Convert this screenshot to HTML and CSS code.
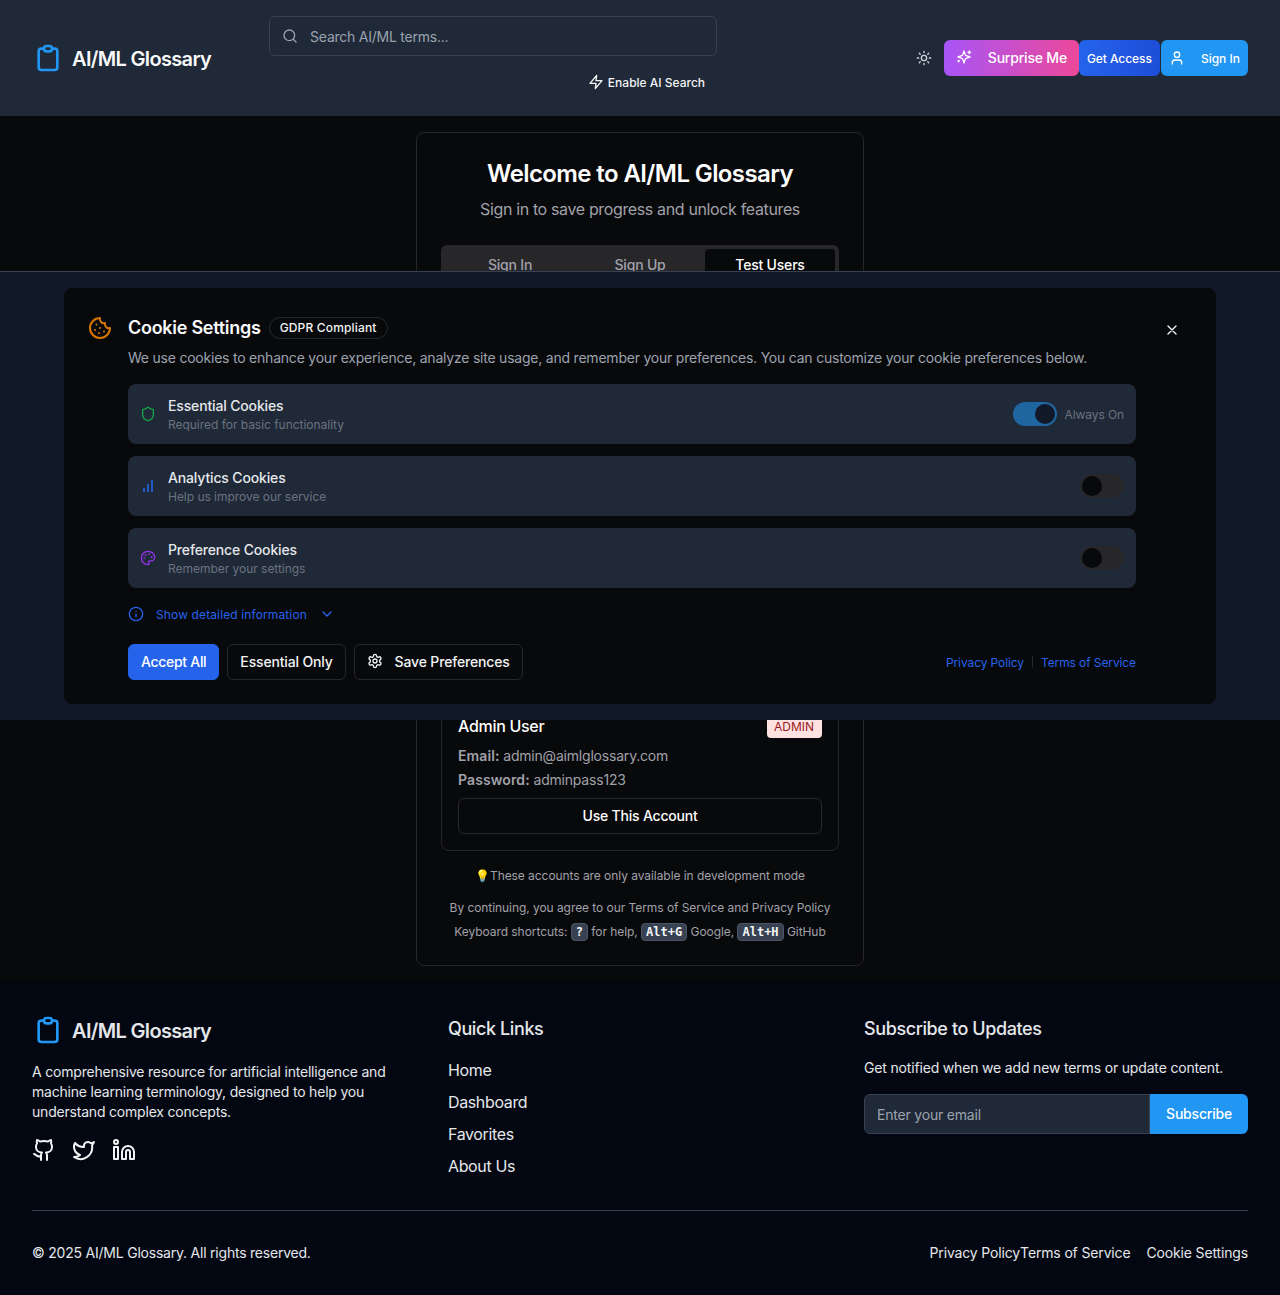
FILE: index.html
```html
<!DOCTYPE html>
<html lang="en">
<head>
<meta charset="utf-8">
<title>AI/ML Glossary</title>
<link rel="stylesheet" href="styles.css">
</head>
<body>
<header class="site-header">
  <a class="logo logo-header">
    <svg class="logo-icon" viewBox="0 0 24 24"><path d="M9 5H7a2 2 0 0 0-2 2v12a2 2 0 0 0 2 2h10a2 2 0 0 0 2-2V7a2 2 0 0 0-2-2h-2M9 5a2 2 0 0 0 2 2h2a2 2 0 0 0 2-2M9 5a2 2 0 0 1 2-2h2a2 2 0 0 1 2 2"/></svg>
    <span>AI/ML Glossary</span>
  </a>
  <div class="search-block">
    <div class="search-box">
      <svg class="ic16 search-icon" viewBox="0 0 24 24"><circle cx="11" cy="11" r="8"/><path d="m21 21-4.3-4.3"/></svg>
      <span class="search-placeholder">Search AI/ML terms...</span>
    </div>
    <div class="ai-row">
      <button class="ai-btn">
        <svg class="ic16" viewBox="0 0 24 24"><path d="M13 2 3 14h9l-1 8 10-12h-9l1-8z"/></svg>
        Enable AI Search
      </button>
    </div>
  </div>
  <div class="header-actions">
    <button class="theme-btn">
      <svg class="ic16" viewBox="0 0 24 24"><circle cx="12" cy="12" r="4"/><path d="M12 2v2M12 20v2M4.93 4.93l1.41 1.41M17.66 17.66l1.41 1.41M2 12h2M20 12h2M6.34 17.66l-1.41 1.41M19.07 4.93l-1.41 1.41"/></svg>
    </button>
    <button class="hbtn surprise">
      <svg class="ic16" viewBox="0 0 24 24"><path d="m12 3-1.9 5.8a2 2 0 0 1-1.3 1.3L3 12l5.8 1.9a2 2 0 0 1 1.3 1.3L12 21l1.9-5.8a2 2 0 0 1 1.3-1.3L21 12l-5.8-1.9a2 2 0 0 1-1.3-1.3L12 3Z"/><path d="M20 3v4M22 5h-4M4 17v2M5 18H3"/></svg>
      Surprise Me
    </button>
    <button class="hbtn access">Get Access</button>
    <button class="hbtn signin">
      <svg class="ic16" viewBox="0 0 24 24"><path d="M19 21v-2a4 4 0 0 0-4-4H9a4 4 0 0 0-4 4v2"/><circle cx="12" cy="7" r="4"/></svg>
      Sign In
    </button>
  </div>
</header>

<main class="main">
  <section class="auth-card">
    <h1 class="auth-title">Welcome to AI/ML Glossary</h1>
    <p class="auth-sub">Sign in to save progress and unlock features</p>
    <div class="tabs">
      <div class="tab">Sign In</div>
      <div class="tab">Sign Up</div>
      <div class="tab tab-active">Test Users</div>
    </div>
    <div class="auth-lower">
      <div class="account">
        <div class="account-head">
          <span class="account-name">Admin User</span>
          <span class="account-badge">ADMIN</span>
        </div>
        <p class="account-line"><strong>Email:</strong> admin@aimlglossary.com</p>
        <p class="account-line"><strong>Password:</strong> adminpass123</p>
        <button class="use-btn">Use This Account</button>
      </div>
      <p class="dev-note">💡These accounts are only available in development mode</p>
      <p class="legal">By continuing, you agree to our Terms of Service and Privacy Policy</p>
      <p class="legal">Keyboard shortcuts: <kbd>?</kbd> for help, <kbd>Alt+G</kbd> Google, <kbd>Alt+H</kbd> GitHub</p>
    </div>
  </section>
</main>

<footer class="footer">
  <div class="footer-grid">
    <div>
      <a class="logo logo-footer">
        <svg class="logo-icon" viewBox="0 0 24 24"><path d="M9 5H7a2 2 0 0 0-2 2v12a2 2 0 0 0 2 2h10a2 2 0 0 0 2-2V7a2 2 0 0 0-2-2h-2M9 5a2 2 0 0 0 2 2h2a2 2 0 0 0 2-2M9 5a2 2 0 0 1 2-2h2a2 2 0 0 1 2 2"/></svg>
        <span>AI/ML Glossary</span>
      </a>
      <p class="footer-about">A comprehensive resource for artificial intelligence and machine learning terminology, designed to help you understand complex concepts.</p>
      <div class="socials">
        <svg class="ic24" viewBox="0 0 24 24"><path d="M15 22v-4a4.8 4.8 0 0 0-1-3.5c3 0 6-2 6-5.5.08-1.25-.27-2.48-1-3.5.28-1.15.28-2.35 0-3.5 0 0-1 0-3 1.5-2.64-.5-5.36-.5-8 0C6 2 5 2 5 2c-.3 1.15-.3 2.35 0 3.5A5.403 5.403 0 0 0 4 9c0 3.5 3 5.5 6 5.5-.39.49-.68 1.05-.85 1.65-.17.6-.22 1.23-.15 1.85v4"/><path d="M9 18c-4.51 2-5-2-7-2"/></svg>
        <svg class="ic24" viewBox="0 0 24 24"><path d="M22 4s-.7 2.1-2 3.4c1.6 10-9.4 17.3-18 11.6 2.2.1 4.4-.6 6-2C3 15.5.5 9.6 3 5c2.2 2.6 5.6 4.1 9 4-.9-4.2 4-6.6 7-3.8 1.1 0 3-1.2 3-1.2z"/></svg>
        <svg class="ic24" viewBox="0 0 24 24"><path d="M16 8a6 6 0 0 1 6 6v7h-4v-7a2 2 0 0 0-2-2 2 2 0 0 0-2 2v7h-4v-7a6 6 0 0 1 6-6z"/><rect x="2" y="9" width="4" height="12"/><circle cx="4" cy="4" r="2"/></svg>
      </div>
    </div>
    <div>
      <h3 class="footer-title">Quick Links</h3>
      <ul class="footer-links">
        <li>Home</li>
        <li>Dashboard</li>
        <li>Favorites</li>
        <li>About Us</li>
      </ul>
    </div>
    <div>
      <h3 class="footer-title">Subscribe to Updates</h3>
      <p class="footer-sub">Get notified when we add new terms or update content.</p>
      <div class="subscribe">
        <div class="sub-input">Enter your email</div>
        <button class="sub-btn">Subscribe</button>
      </div>
    </div>
  </div>
  <div class="footer-bottom">
    <span>© 2025 AI/ML Glossary. All rights reserved.</span>
    <div class="footer-legal">
      <div class="legal-pair"><span>Privacy Policy</span><span>Terms of Service</span></div>
      <span>Cookie Settings</span>
    </div>
  </div>
</footer>

<aside class="cookie-banner">
  <div class="cookie-card">
    <svg class="cookie-icon" viewBox="0 0 24 24"><path d="M12 2a10 10 0 1 0 10 10 4 4 0 0 1-5-5 4 4 0 0 1-5-5"/><path d="M8.5 8.5v.01M16 15.5v.01M12 12v.01M11 17v.01M7 14v.01"/></svg>
    <div class="cookie-body">
      <div class="cookie-head">
        <h2 class="cookie-title">Cookie Settings</h2>
        <span class="gdpr">GDPR Compliant</span>
      </div>
      <p class="cookie-desc">We use cookies to enhance your experience, analyze site usage, and remember your preferences. You can customize your cookie preferences below.</p>
      <div class="cookie-rows">
        <div class="cookie-row">
          <svg class="ic16 c-green" viewBox="0 0 24 24"><path d="M20 13c0 5-3.5 7.5-7.66 8.95a1 1 0 0 1-.67-.01C7.5 20.5 4 18 4 13V6a1 1 0 0 1 1-1c2 0 4.5-1.2 6.24-2.72a1.17 1.17 0 0 1 1.52 0C14.51 3.81 17 5 19 5a1 1 0 0 1 1 1z"/></svg>
          <div class="row-text"><div class="row-name">Essential Cookies</div><div class="row-sub">Required for basic functionality</div></div>
          <div class="row-control">
            <span class="toggle toggle-on"><i class="thumb"></i></span>
            <span class="always">Always On</span>
          </div>
        </div>
        <div class="cookie-row">
          <svg class="ic16 c-blue bars" viewBox="0 0 24 24"><path d="M6 21v-6M12 21V9M18 21V3"/></svg>
          <div class="row-text"><div class="row-name">Analytics Cookies</div><div class="row-sub">Help us improve our service</div></div>
          <div class="row-control"><span class="toggle"><i class="thumb"></i></span></div>
        </div>
        <div class="cookie-row">
          <svg class="ic16 c-purple" viewBox="0 0 24 24"><circle cx="13.5" cy="6.5" r=".5"/><circle cx="17.5" cy="10.5" r=".5"/><circle cx="8.5" cy="7.5" r=".5"/><circle cx="6.5" cy="12.5" r=".5"/><path d="M12 2C6.5 2 2 6.5 2 12s4.5 10 10 10c.926 0 1.648-.746 1.648-1.688 0-.437-.18-.835-.437-1.125-.29-.289-.438-.652-.438-1.125a1.64 1.64 0 0 1 1.668-1.668h1.996c3.051 0 5.555-2.503 5.555-5.554C21.965 6.012 17.461 2 12 2z"/></svg>
          <div class="row-text"><div class="row-name">Preference Cookies</div><div class="row-sub">Remember your settings</div></div>
          <div class="row-control"><span class="toggle"><i class="thumb"></i></span></div>
        </div>
      </div>
      <div class="details">
        <svg class="ic16" viewBox="0 0 24 24"><circle cx="12" cy="12" r="10"/><path d="M12 16v-4M12 8h.01"/></svg>
        <span>Show detailed information</span>
        <svg class="ic16" viewBox="0 0 24 24"><path d="m6 9 6 6 6-6"/></svg>
      </div>
      <div class="cookie-actions">
        <div class="action-btns">
          <button class="cbtn cbtn-primary">Accept All</button>
          <button class="cbtn">Essential Only</button>
          <button class="cbtn cbtn-icon">
            <svg class="ic16" viewBox="0 0 24 24"><path d="M12.22 2h-.44a2 2 0 0 0-2 2v.18a2 2 0 0 1-1 1.73l-.43.25a2 2 0 0 1-2 0l-.15-.08a2 2 0 0 0-2.73.73l-.22.38a2 2 0 0 0 .73 2.73l.15.1a2 2 0 0 1 1 1.72v.51a2 2 0 0 1-1 1.74l-.15.09a2 2 0 0 0-.73 2.73l.22.38a2 2 0 0 0 2.73.73l.15-.08a2 2 0 0 1 2 0l.43.25a2 2 0 0 1 1 1.73V20a2 2 0 0 0 2 2h.44a2 2 0 0 0 2-2v-.18a2 2 0 0 1 1-1.73l.43-.25a2 2 0 0 1 2 0l.15.08a2 2 0 0 0 2.73-.73l.22-.39a2 2 0 0 0-.73-2.73l-.15-.08a2 2 0 0 1-1-1.74v-.5a2 2 0 0 1 1-1.74l.15-.09a2 2 0 0 0 .73-2.73l-.22-.38a2 2 0 0 0-2.73-.73l-.15.08a2 2 0 0 1-2 0l-.43-.25a2 2 0 0 1-1-1.73V4a2 2 0 0 0-2-2z"/><circle cx="12" cy="12" r="3"/></svg>
            Save Preferences
          </button>
        </div>
        <div class="policy-links"><span>Privacy Policy</span><i class="policy-sep"></i><span>Terms of Service</span></div>
      </div>
    </div>
    <button class="close-btn">
      <svg class="ic16" viewBox="0 0 24 24"><path d="M18 6 6 18M6 6l12 12"/></svg>
    </button>
  </div>
</aside>
</body>
</html>
```

FILE: styles.css
```css
* { box-sizing: border-box; }
html, body { margin: 0; padding: 0; }
body {
  position: relative;
  background: #030712;
  color: #fff;
  font-family: Inter, "Liberation Sans", sans-serif;
  font-size: 14px;
  letter-spacing: -0.2px;
}
h1, h2, h3, p, ul { margin: 0; padding: 0; }
button { font-family: inherit; letter-spacing: inherit; border: 0; cursor: pointer; color: inherit; background: none; }
svg { fill: none; stroke: currentColor; stroke-width: 2; stroke-linecap: round; stroke-linejoin: round; flex: none; display: block; }
.ic16 { width: 16px; height: 16px; }
.ic24 { width: 24px; height: 24px; }

/* header */
.site-header { display: flex; align-items: center; height: 116px; padding: 16px 32px; background: #1f2937; }
.logo { display: flex; align-items: center; gap: 8px; font-size: 20px; font-weight: 600; line-height: 28px; letter-spacing: -0.66px; }
.logo span { padding-top: 2px; }
.logo-icon { width: 32px; height: 32px; color: #2196f3; }
.logo-header { color: #f9fafb; }
.logo-footer { color: #e5e7eb; }
.search-block { width: 448px; margin-left: 58px; }
.search-box { display: flex; align-items: center; gap: 12px; height: 40px; padding: 0 12px; border: 1px solid #374151; border-radius: 6px; }
.search-icon { color: #9ca3af; }
.search-placeholder { color: #9ca3af; font-size: 14px; letter-spacing: -0.24px; }
.ai-row { display: flex; justify-content: flex-end; margin-top: 8px; }
.ai-btn { display: flex; align-items: center; gap: 4px; height: 36px; padding: 0 12px; font-size: 12px; font-weight: 500; letter-spacing: 0; color: #f3f4f6; }
.header-actions { display: flex; align-items: center; margin-left: auto; }
.theme-btn { display: flex; align-items: center; justify-content: center; width: 40px; height: 36px; padding: 0; color: #d1d5db; }
.hbtn { display: flex; align-items: center; height: 36px; border-radius: 6px; color: #fff; }
.surprise { gap: 16px; padding: 0 12px 2px; font-size: 14px; font-weight: 500; background: linear-gradient(90deg, #a855f7, #ec4899); }
.access { padding: 0 8px; font-size: 12px; font-weight: 500; letter-spacing: -0.06px; background: linear-gradient(90deg, #2563eb, #1d4ed8); }
.signin { gap: 16px; padding: 0 8px; font-size: 12px; font-weight: 500; letter-spacing: 0; background: #2196f3; margin-left: 1px; }

/* main */
.main { display: flex; justify-content: center; padding: 16px 0; background: #08090b; }
.auth-card { display: flex; flex-direction: column; width: 448px; height: 834px; padding: 25px 24px 21px; border: 1px solid #27272a; border-radius: 8px; background: #08090b; }
.auth-title { font-size: 24px; line-height: 32px; font-weight: 600; letter-spacing: -0.6px; text-align: center; }
.auth-sub { margin-top: 7px; font-size: 16px; line-height: 24px; letter-spacing: -0.36px; color: #a1a1aa; text-align: center; }
.tabs { display: grid; grid-template-columns: repeat(3, 1fr); height: 40px; margin-top: 24px; padding: 4px; background: #27272a; border-radius: 6px; }
.tab { display: flex; align-items: center; justify-content: center; padding-bottom: 2px; font-size: 14px; font-weight: 500; color: #a1a1aa; border-radius: 4px; }
.tab-active { background: #08090b; color: #fff; }
.auth-lower { margin-top: auto; }
.account { padding: 16px; border: 1px solid #27272a; border-radius: 8px; }
.account-head { display: flex; align-items: center; justify-content: space-between; height: 24px; margin-bottom: 5px; }
.account-name { padding-bottom: 2px; font-size: 16px; font-weight: 500; letter-spacing: -0.3px; }
.account-badge { padding: 2px 8px 2px 7px; font-size: 12px; line-height: 18px; letter-spacing: 0; color: #991b1b; background: #fee2e2; border-radius: 4px; }
.account-line { font-size: 14px; line-height: 24px; letter-spacing: -0.2px; color: #a1a1aa; }
.account-line strong { font-weight: 600; letter-spacing: 0.1px; }
.use-btn { display: block; width: 100%; height: 36px; margin-top: 6px; padding-bottom: 2px; border: 1px solid #27272a; border-radius: 6px; font-size: 14px; font-weight: 500; }
.dev-note { margin-top: 16px; font-size: 12px; line-height: 18px; letter-spacing: -0.06px; color: #a1a1aa; text-align: center; }
.legal { font-size: 12px; line-height: 24px; letter-spacing: -0.06px; color: #a1a1aa; text-align: center; }
.dev-note + .legal { margin-top: 11px; }
kbd { display: inline-block; padding: 0 4px; font-family: "DejaVu Sans Mono", "Liberation Mono", monospace; font-size: 12px; font-weight: 700; line-height: 16px; letter-spacing: 0; color: #f3f4f6; background: #374151; border: 1px solid #4b5563; border-radius: 4px; }

/* footer */
.footer { padding: 32px; background: #030712; }
.footer-grid { display: grid; grid-template-columns: repeat(3, 1fr); gap: 32px; }
.footer-about { margin-top: 16px; font-size: 14px; line-height: 20px; color: #e5e7eb; }
.socials { display: flex; gap: 16px; margin-top: 16px; color: #f3f4f6; }
.footer-title { padding-top: 2px; font-size: 18px; line-height: 26px; font-weight: 500; letter-spacing: -0.4px; color: #e5e7eb; }
.footer-links { display: flex; flex-direction: column; gap: 8px; margin-top: 16px; list-style: none; font-size: 16px; line-height: 24px; letter-spacing: -0.37px; color: #e5e7eb; }
.footer-sub { margin-top: 16px; font-size: 14px; line-height: 20px; letter-spacing: -0.17px; color: #e5e7eb; }
.subscribe { display: flex; height: 40px; margin-top: 16px; }
.sub-input { display: flex; align-items: center; flex: 1; padding: 0 12px; font-size: 14px; color: #9ca3af; background: #1f2937; border: 1px solid #374151; border-radius: 6px 0 0 6px; }
.sub-btn { width: 98px; padding: 0 0 2px; font-size: 14px; font-weight: 500; color: #fff; background: #2196f3; border-radius: 0 6px 6px 0; }
.footer-bottom { display: flex; align-items: center; justify-content: space-between; margin-top: 32px; padding-top: 32px; border-top: 1px solid #374151; font-size: 14px; line-height: 20px; letter-spacing: -0.22px; color: #e5e7eb; }
.footer-legal { display: flex; gap: 16px; letter-spacing: -0.15px; }
.legal-pair { display: flex; }

/* cookie banner */
.cookie-banner { position: absolute; top: 271px; left: 0; right: 0; height: 449px; padding: 16px 64px; background: #111827; border-top: 1px solid #374151; }
.cookie-card { display: flex; gap: 16px; height: 416px; padding: 24px; background: #08090b; border-radius: 8px; }
.cookie-icon { width: 24px; height: 24px; margin-top: 4px; color: #d97706; }
.cookie-body { flex: 1; min-width: 0; }
.cookie-head { display: flex; align-items: center; gap: 8px; height: 30px; padding-top: 2px; }
.cookie-title { font-size: 18px; line-height: 28px; font-weight: 600; letter-spacing: -0.27px; color: #f9fafb; }
.gdpr { padding: 0 10px; font-size: 12px; line-height: 20px; font-weight: 500; letter-spacing: 0.17px; color: #f3f4f6; border: 1px solid #27272a; border-radius: 999px; }
.cookie-desc { margin-top: 6px; font-size: 14px; line-height: 20px; letter-spacing: -0.22px; color: #9ca3af; }
.cookie-rows { display: flex; flex-direction: column; gap: 12px; margin-top: 16px; }
.cookie-row { display: flex; align-items: center; gap: 12px; height: 60px; padding: 0 12px; background: #1f2937; border-radius: 8px; }
.c-green { color: #16a34a; }
.c-blue { color: #2459c4; }
.c-purple { color: #9333ea; }
.bars { stroke-width: 3; stroke-linecap: butt; }
.row-text { flex: 1; min-width: 0; padding-top: 1px; }
.row-name { font-size: 14px; line-height: 20px; font-weight: 500; letter-spacing: -0.15px; color: #e5e7eb; }
.row-sub { margin-top: 1px; font-size: 12px; line-height: 16px; letter-spacing: -0.03px; color: #6b7280; }
.row-control { display: flex; align-items: center; gap: 8px; }
.toggle { display: block; width: 44px; height: 24px; padding: 2px; background: #27272a; border-radius: 999px; }
.thumb { display: block; width: 20px; height: 20px; background: #08090b; border-radius: 50%; }
.toggle-on { background: #1f659f; }
.toggle-on .thumb { margin-left: 20px; background: #111827; }
.always { font-size: 12px; letter-spacing: -0.1px; color: #6b7280; }
.details { display: flex; align-items: center; gap: 12px; margin-top: 16px; height: 20px; font-size: 12px; letter-spacing: 0.12px; color: #2563eb; }
.cookie-actions { display: flex; align-items: center; justify-content: space-between; margin-top: 20px; }
.action-btns { display: flex; gap: 8px; }
.cbtn { display: flex; align-items: center; height: 36px; padding: 0 12px 2px; font-size: 14px; font-weight: 500; letter-spacing: -0.16px; color: #f3f4f6; border: 1px solid #27272a; border-radius: 6px; }
.cbtn-primary { letter-spacing: -0.3px; color: #fff; background: #2563eb; border-color: #2563eb; }
.cbtn-icon { gap: 12px; }
.policy-links { display: flex; align-items: center; gap: 8px; font-size: 12px; letter-spacing: -0.1px; color: #2563eb; }
.policy-sep { display: block; width: 1px; height: 12px; background: #27272a; }
.close-btn { display: flex; align-items: center; justify-content: center; width: 40px; height: 36px; padding: 0; color: #f3f4f6; }
```
